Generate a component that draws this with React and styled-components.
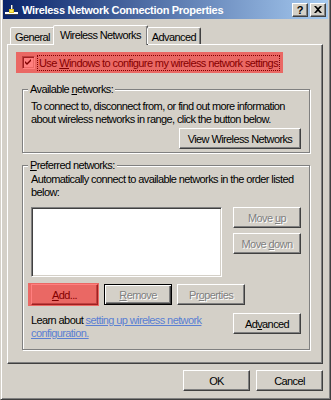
import React from "react";
import styled, { createGlobalStyle } from "styled-components";

const FONT = `font-family: "Liberation Sans", Arial, sans-serif; font-size: 11px; letter-spacing: -0.6px;`;

const GlobalStyle = createGlobalStyle`
  html, body {
    margin: 0;
    padding: 0;
    background: #d4d0c8;
  }
  body {
    ${FONT}
    color: #000;
  }
`;

const Window = styled.div`
  box-sizing: border-box;
  width: 331px;
  height: 400px;
  background: #d4d0c8;
  border: 1px solid;
  border-top: 0;
  border-color: transparent #404040 #404040 #d4d0c8;
  box-shadow: inset 1px 0 #fff, inset -1px -1px #808080;
  padding: 0 2px 2px 2px;
  display: flex;
  flex-direction: column;
`;

const TitleBar = styled.div`
  height: 19px;
  flex-shrink: 0;
  display: flex;
  align-items: center;
  padding: 0 2px 0 1px;
  background: linear-gradient(to right, #0a246a, #a6caf0);
  color: #fff;
  font-weight: bold;
  letter-spacing: -0.3px;
`;

const TitleText = styled.span`
  flex: 1;
  margin-left: 3px;
  white-space: nowrap;
`;

const CaptionButton = styled.button`
  box-sizing: border-box;
  width: 16px;
  height: 14px;
  padding: 0;
  margin-left: ${(p) => (p.$gap ? "2px" : "0")};
  background: #d4d0c8;
  border: 1px solid;
  border-color: #fff #404040 #404040 #fff;
  box-shadow: inset -1px -1px #808080;
  display: flex;
  align-items: center;
  justify-content: center;
  font: bold 11px "Liberation Sans", Arial, sans-serif;
  color: #000;
`;

const Body = styled.div`
  flex: 1;
  display: flex;
  flex-direction: column;
  padding: 6px 5px 0 4px;
`;

const TabRow = styled.div`
  display: flex;
  align-items: flex-end;
  padding-left: 3px;
  height: 19px;
  position: relative;
  z-index: 1;
`;

const Tab = styled.div`
  box-sizing: border-box;
  height: ${(p) => (p.$active ? "20px" : "17px")};
  padding: ${(p) => (p.$active ? "2px 6px 0" : "2px 4px 0")};
  margin: ${(p) => (p.$active ? "0 -1px -1px -2px" : "0")};
  background: #d4d0c8;
  border: 1px solid;
  border-bottom: 0;
  border-color: #fff #404040 transparent #fff;
  box-shadow: inset -1px 0 #808080;
  border-radius: 2px 2px 0 0;
  white-space: nowrap;
  line-height: 14px;
`;

const Panel = styled.div`
  box-sizing: border-box;
  height: 320px;
  flex-shrink: 0;
  border: 1px solid;
  border-color: #fff #404040 #404040 #fff;
  box-shadow: inset -1px -1px #808080;
  padding: 7px 13px 0 8px;
  display: flex;
  flex-direction: column;
`;

const Highlight = styled.div`
  position: relative;
  display: flex;
  align-items: center;
  height: 21px;
  width: 267px;
  padding-left: 6px;
  box-sizing: border-box;
  &::after {
    content: "";
    position: absolute;
    inset: 0;
    background: rgba(255, 0, 0, 0.5);
    pointer-events: none;
  }
`;

const CheckBox = styled.span`
  box-sizing: border-box;
  flex-shrink: 0;
  width: 13px;
  height: 13px;
  background: #fff;
  border: 1px solid;
  border-color: #808080 #fff #fff #808080;
  box-shadow: inset 1px 1px #404040, inset -1px -1px #d4d0c8;
  display: flex;
  align-items: center;
  justify-content: center;
`;

const FocusLabel = styled.span`
  margin-left: 3px;
  padding: 0 1px;
  outline: 1px dotted #000;
  line-height: 14px;
  white-space: nowrap;
`;

const Group = styled.div`
  position: relative;
  margin: ${(p) => p.$top}px 0 0 6px;
  width: 288px;
  height: ${(p) => p.$h}px;
  box-sizing: border-box;
  border: 1px solid #808080;
  box-shadow: inset 1px 1px #fff, 1px 1px #fff;
  padding: ${(p) => p.$pad};
  display: flex;
  flex-direction: column;
`;

const GroupTitle = styled.span`
  position: absolute;
  top: -7px;
  left: 5px;
  padding: 0 2px;
  background: #d4d0c8;
  line-height: 13px;
`;

const Text = styled.div`
  line-height: 13px;
  white-space: nowrap;
  margin-top: ${(p) => p.$mt || 0}px;
`;

const Button = styled.button`
  box-sizing: border-box;
  width: ${(p) => p.$w || 68}px;
  height: 21px;
  padding: 0;
  background: #d4d0c8;
  ${FONT}
  color: ${(p) => (p.disabled ? "#808080" : "#000")};
  text-shadow: ${(p) => (p.disabled ? "1px 1px #fff" : "none")};
  border: 1px solid;
  border-color: ${(p) =>
    p.$default ? "#000" : "#fff #404040 #404040 #fff"};
  box-shadow: ${(p) =>
    p.$default
      ? "inset 1px 1px #fff, inset -1px -1px #404040, inset -2px -2px #808080"
      : "inset -1px -1px #808080"};
  white-space: nowrap;
`;

const Marked = styled.div`
  position: relative;
  padding: 1px 1px 1px 3px;
  margin-left: -3px;
  &::after {
    content: "";
    position: absolute;
    inset: 0;
    background: rgba(255, 0, 0, 0.5);
    pointer-events: none;
  }
`;

const Row = styled.div`
  display: flex;
  align-items: ${(p) => p.$align || "center"};
  justify-content: ${(p) => p.$justify || "flex-start"};
  gap: ${(p) => p.$gap || 0}px;
  margin-top: ${(p) => p.$mt || 0}px;
`;

const Column = styled.div`
  display: flex;
  flex-direction: column;
  gap: ${(p) => p.$gap || 0}px;
`;

const ListBox = styled.div`
  box-sizing: border-box;
  width: 191px;
  height: 70px;
  background: #fff;
  border: 1px solid;
  border-color: #808080 #fff #fff #808080;
  box-shadow: inset 1px 1px #404040, inset -1px -1px #d4d0c8;
`;

const Link = styled.a`
  color: #5a7fd3;
  text-decoration: underline;
`;

const Footer = styled.div`
  display: flex;
  justify-content: flex-end;
  gap: 6px;
  padding: 6px 0 0;
`;

const U = styled.span`
  text-decoration: underline;
`;

const NetIcon = () => (
  <svg width="15" height="14" viewBox="0 0 15 14">
    <rect x="1" y="9" width="13" height="2" fill="#fff" />
    <rect x="1" y="11" width="13" height="1" fill="#404040" />
    <rect x="7" y="2" width="1" height="7" fill="#fff" />
    <rect x="8" y="2" width="1" height="7" fill="#808080" />
    <rect x="5" y="6" width="5" height="4" fill="#e0c020" />
    <rect x="6" y="7" width="3" height="2" fill="#fff060" />
  </svg>
);

const CheckMark = () => (
  <svg width="7" height="7" viewBox="0 0 7 7">
    <path d="M0 2 L2 4 L6 0 L6 2 L2 6 L0 4 Z" fill="#000" />
  </svg>
);

export default function App() {
  return (
    <>
      <GlobalStyle />
      <Window>
        <TitleBar>
          <NetIcon />
          <TitleText>Wireless Network Connection Properties</TitleText>
          <CaptionButton>?</CaptionButton>
          <CaptionButton $gap>
            <svg width="8" height="7" viewBox="0 0 8 7">
              <path d="M0 0h2l2 2 2-2h2L5 3.5 8 7H6L4 5 2 7H0l3-3.5z" fill="#000" />
            </svg>
          </CaptionButton>
        </TitleBar>
        <Body>
          <TabRow>
            <Tab>General</Tab>
            <Tab $active>Wireless Networks</Tab>
            <Tab>Advanced</Tab>
          </TabRow>
          <Panel>
            <Highlight>
              <CheckBox>
                <CheckMark />
              </CheckBox>
              <FocusLabel>
                Use <U>W</U>indows to configure my wireless network settings
              </FocusLabel>
            </Highlight>
            <Group $top={16} $h={64} $pad="10px 8px 3px 8px">
              <GroupTitle>
                Available <U>n</U>etworks:
              </GroupTitle>
              <Text>To connect to, disconnect from, or find out more information</Text>
              <Text>about wireless networks in range, click the button below.</Text>
              <Row $justify="flex-end" $mt={2}>
                <Button $w={122}>View Wireless Networks</Button>
              </Row>
            </Group>
            <Group $top={12} $h={185} $pad="7px 8px 0 8px">
              <GroupTitle>
                <U>P</U>referred networks:
              </GroupTitle>
              <Text>Automatically connect to available networks in the order listed</Text>
              <Text>below:</Text>
              <Row $align="flex-start" $justify="space-between" $mt={8}>
                <ListBox />
                <Column $gap={5}>
                  <Button disabled>
                    Move <U>u</U>p
                  </Button>
                  <Button disabled>
                    Move <U>d</U>own
                  </Button>
                </Column>
              </Row>
              <Row $gap={5} $mt={6}>
                <Marked>
                  <Button $w={67}>
                    <U>A</U>dd...
                  </Button>
                </Marked>
                <Button $w={68} $default disabled>
                  <U>R</U>emove
                </Button>
                <Button $w={68} disabled>
                  Pr<U>o</U>perties
                </Button>
              </Row>
              <Row $align="flex-start" $justify="space-between" $mt={7}>
                <Text $mt={1}>
                  Learn about <Link href="#">setting up wireless network</Link>
                  <br />
                  <Link href="#">configuration.</Link>
                </Text>
                <Button>
                  Ad<U>v</U>anced
                </Button>
              </Row>
            </Group>
          </Panel>
          <Footer>
            <Button $w={67}>OK</Button>
            <Button $w={67}>Cancel</Button>
          </Footer>
        </Body>
      </Window>
    </>
  );
}
